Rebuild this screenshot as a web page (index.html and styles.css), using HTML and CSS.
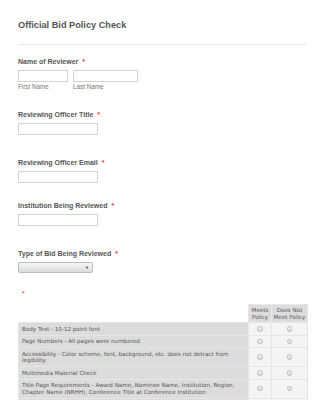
FILE: index.html
```html
<!DOCTYPE html>
<html>
<head>
<meta charset="utf-8">
<link rel="stylesheet" href="styles.css">
</head>
<body>
<div class="form">
  <div class="header"><h1 class="title">Official Bid Policy Check</h1></div>

  <div class="field field-name">
    <div class="label">Name of Reviewer <span class="req">*</span></div>
    <div class="name-row">
      <div class="name-part">
        <div class="input input-first"></div>
        <div class="sublabel">First Name</div>
      </div>
      <div class="name-part">
        <div class="input input-last"></div>
        <div class="sublabel">Last Name</div>
      </div>
    </div>
  </div>

  <div class="field field-title">
    <div class="label">Reviewing Officer Title <span class="req">*</span></div>
    <div class="input input-wide"></div>
  </div>

  <div class="field field-email">
    <div class="label">Reviewing Officer Email <span class="req">*</span></div>
    <div class="input input-wide"></div>
  </div>

  <div class="field field-inst">
    <div class="label">Institution Being Reviewed <span class="req">*</span></div>
    <div class="input input-wide"></div>
  </div>

  <div class="field field-type">
    <div class="label">Type of Bid Being Reviewed <span class="req">*</span></div>
    <div class="select"><span class="arrow">▼</span></div>
  </div>

  <div class="field field-matrix">
    <div class="matrix-req"><span class="req">*</span></div>
    <table class="matrix">
      <colgroup><col class="c-label"><col class="c-meets"><col class="c-not"></colgroup>
      <tr class="head">
        <th class="blank"></th>
        <th>Meets Policy</th>
        <th>Does Not Meet Policy</th>
      </tr>
      <tr><td class="q">Body Text - 10-12 point font</td><td class="r"><span class="radio"></span></td><td class="r"><span class="radio"></span></td></tr>
      <tr><td class="q">Page Numbers - All pages were numbered</td><td class="r"><span class="radio"></span></td><td class="r"><span class="radio"></span></td></tr>
      <tr><td class="q">Accessibility - Color scheme, font, background, etc. does not detract from legibility</td><td class="r"><span class="radio"></span></td><td class="r"><span class="radio"></span></td></tr>
      <tr><td class="q">Multimedia Material Check</td><td class="r"><span class="radio"></span></td><td class="r"><span class="radio"></span></td></tr>
      <tr><td class="q">Title Page Requirements - Award Name, Nominee Name, Institution, Region, Chapter Name (NRHH), Conference Title at Conference Institution</td><td class="r"><span class="radio"></span></td><td class="r"><span class="radio"></span></td></tr>
      <tr><td class="q">Copyright Material Utilization Check</td><td class="r"><span class="radio"></span></td><td class="r"><span class="radio"></span></td></tr>
    </table>
  </div>
</div>
</body>
</html>
```
FILE: styles.css
```css
html, body {
  margin: 0;
  padding: 0;
  background: #fff;
}
.form {
  padding: 19px 18px 0 18px;
  font-family: "Liberation Sans", Arial, sans-serif;
}
.header {
  border-bottom: 1px solid #ececec;
  padding-bottom: 13px;
}
.title {
  margin: 0;
  font-size: 9.2px;
  line-height: 12px;
  font-weight: bold;
  color: #555;
}
.label {
  font-size: 7px;
  line-height: 10px;
  font-weight: bold;
  color: #555;
  margin-bottom: 3px;
}
.req {
  color: #f23a3a;
  margin-left: 2px;
}
.field-name { margin-top: 12px; }
.field-title { margin-top: 19px; }
.field-email { margin-top: 23px; }
.field-inst { margin-top: 18px; }
.field-type { margin-top: 23px; }
.field-matrix { margin-top: 17px; }

.name-row {
  display: flex;
  gap: 5px;
}
.input {
  box-sizing: border-box;
  height: 12px;
  border: 1px solid #d4d4d4;
  background: #fff;
}
.input-first { width: 50px; }
.input-last { width: 65px; }
.input-wide { width: 80px; }
.sublabel {
  font-size: 6.3px;
  line-height: 9px;
  color: #777;
}
.select {
  box-sizing: border-box;
  width: 75px;
  height: 11px;
  border: 1px solid #bdbdbd;
  border-radius: 2px;
  background: linear-gradient(#f6f6f6, #dcdcdc);
  display: flex;
  justify-content: flex-end;
  align-items: center;
  padding-right: 3px;
}
.arrow {
  font-size: 4px;
  color: #333;
  line-height: 4px;
}
.matrix-req {
  font-size: 7px;
  line-height: 8px;
  padding-left: 2px;
}
.matrix {
  margin-top: 6px;
  width: 289px;
  table-layout: fixed;
  border-collapse: collapse;
  font-family: "DejaVu Sans", Verdana, sans-serif;
  font-size: 5.6px;
  line-height: 6.5px;
  color: #555;
}
.c-label { width: 230px; }
.c-meets { width: 23px; }
.c-not { width: 36px; }
.matrix th {
  font-weight: normal;
  background: #dcdcdc;
  border: 1px solid #e8e8e8;
  padding: 2px 0;
  text-align: center;
  height: 13px;
}
.matrix th.blank {
  background: #fff;
  border: none;
}
.matrix td {
  border: 1px solid #e6e6e6;
  padding: 2.5px 3px;
}
.matrix td.q {
  background: #dcdcdc;
}
.matrix td.r {
  background: #f4f4f4;
  text-align: center;
  padding: 0;
}
.radio {
  display: inline-block;
  box-sizing: border-box;
  width: 5.5px;
  height: 5.5px;
  border-radius: 50%;
  border: 1px solid #bcbcbc;
  background: linear-gradient(#f4f4f4, #d8d8d8);
  vertical-align: middle;
}
```
